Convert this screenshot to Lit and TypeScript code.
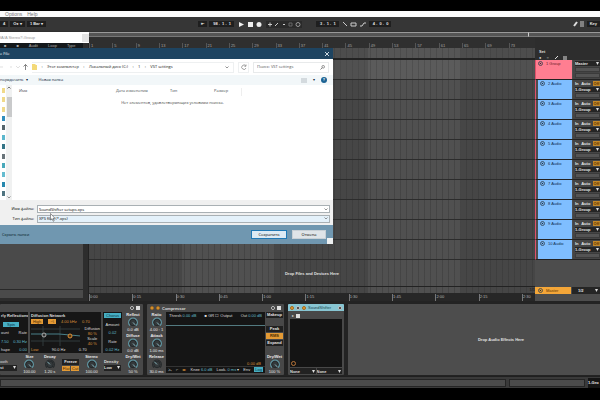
import { LitElement, html, svg, css } from "lit";
import { customElement, property } from "lit/decorators.js";

const bars = Array.from({ length: 19 }, (_, i) => 1 + i * 4);
const times = ["0:00", "0:15", "0:30", "0:45", "1:00", "1:15", "1:30", "1:45", "2:00", "2:15", "2:30"];
const tracks = [2, 3, 4, 5, 6, 7, 8, 9, 10];

@customElement("dial-knob")
class DialKnob extends LitElement {
  @property() label = "";
  @property() value = "";
  @property({ type: Boolean }) dim = false;
  static styles = css`
    :host { display: flex; flex-direction: column; align-items: center; width: 16px; color: #e8e8e8; font-size: 4px; line-height: 5px; white-space: nowrap; }
    svg { display: block; width: 14px; height: 10px; flex: none; }
    .label { font-weight: bold; }
  `;
  render() {
    return html`<span class="label">${this.label}</span>
      <svg viewBox="0 0 14 11" aria-hidden="true">
        <circle cx="7" cy="6" r="3.6" fill="#34393b" stroke="#22282a" />
        <path d="M3.6 9.4A4.8 4.8 0 1 1 10.4 9.4" fill="none" stroke=${this.dim ? "#252a2c" : "#5f99a6"} stroke-width="1.3" />
        <path d="M7 6L${this.dim ? "4 3" : "9.8 9"}" stroke="#8fc0ca" stroke-width="1" />
      </svg>
      <span>${this.value}</span>`;
  }
}

const base = css`
  * { box-sizing: border-box; }
  button, input, select { font: inherit; color: inherit; margin: 0; padding: 0; border: 0; border-radius: 0; background: none; min-width: 0; line-height: inherit; appearance: none; outline: none; white-space: nowrap; }
  svg { display: block; flex: none; }
`;

@customElement("save-dialog")
class SaveDialog extends LitElement {
  static styles = [base, css`
    :host { display: flex; flex-direction: column; background: #fff; color: #111; font-family: "Open Sans", "Noto Sans", sans-serif; font-size: 4px; line-height: 6px; white-space: nowrap; overflow: hidden; }
    .title { height: 11px; background: #1e4461; color: #fff; display: flex; align-items: center; justify-content: space-between; padding: 0 3px 0 0; }
    .address { height: 16px; display: flex; align-items: center; padding: 0 4px 0 0; gap: 4px; }
    .path { display: flex; align-items: center; gap: 3px; flex: 1; height: 11px; border: 1px solid #eef0f1; border-left: 0; padding-right: 4px; }
    .path i { font-style: normal; color: #333; width: 4px; text-align: center; }
    .grow { flex: 1; }
    .refresh { width: 11px; height: 11px; border: 1px solid #eef0f1; display: grid; place-items: center; }
    .search { width: 76px; height: 11px; border: 1px solid #e8eaeb; display: flex; align-items: center; padding: 0 3px; }
    .search input { flex: 1; color: #555; }
    .search input::placeholder { color: #555; }
    .tools { height: 10px; background: #f2f7f9; display: flex; align-items: center; padding: 0 6px 0 0; gap: 6px; color: #0c2338; }
    .new { margin-left: 5px; }
    .help { width: 6px; height: 6px; border-radius: 50%; background: #1b6293; color: #fff; font-weight: bold; line-height: 6px; text-align: center; }
    .files { flex: 1; display: flex; min-height: 0; }
    .tree { width: 12px; display: flex; justify-content: space-between; }
    .places { width: 6px; display: flex; flex-direction: column; align-items: flex-end; justify-content: space-between; padding: 3px 1px 3px 0; }
    .bar { width: 6px; background: #f0f1f1; display: flex; flex-direction: column; justify-content: space-between; align-items: center; padding: 1px 0; }
    .thumb { width: 5px; height: 20px; background: #c9cacb; margin-bottom: 72px; }
    .list { flex: 1; }
    .head { display: grid; grid-template-columns: 97px 54px 44px 27px 1fr; padding: 3px 0 0 7px; color: #44494e; height: 11px; }
    .head span:last-child { border-left: 1px solid #eee; }
    .empty { text-align: center; color: #444; padding: 4px 0 0; margin: 0; }
    .form { background: #f0f0f0; height: 25px; padding: 5px 3px 2px 0; display: grid; grid-template-columns: 34px 1fr; column-gap: 3px; row-gap: 1px; align-items: center; color: #000; }
    .form label { text-align: right; }
    .form input, .form select { width: 100%; height: 8px; border: 1px solid #a9b0b4; background: #fff; padding: 0 1px; line-height: 6px; }
    .form select { background: #e4f1fa; }
    .field { display: grid; align-items: center; }
    .field > * { grid-area: 1 / 1; }
    .field svg { justify-self: end; margin-right: 2px; }
    .foot { height: 19px; background: #7097b0; display: flex; align-items: center; padding: 0 7px 0 2px; gap: 5px; }
    .foot button { width: 34px; height: 9px; background: #dfe4e8; border: 1px solid #c8d0d6; color: #000; }
    .foot .primary { border-color: #1f78b5; background: #dceaf4; width: 36px; }
    .foot .hide { flex: 1; border: 0; background: none; width: auto; text-align: left; color: #041824; }
    .grip { position: absolute; right: 0; bottom: 0; width: 6px; height: 6px; background: #edf0f1; }
    .cursor { position: absolute; left: 50px; top: 165px; }
  `];
  render() {
    const place = (c: string) => html`<svg width="3" height="6"><rect width="3" height="5" fill=${c} /></svg>`;
    const chev = html`<svg width="4" height="3" viewBox="0 0 4 3"><path d="M.5 .5L2 2L3.5 .5" fill="none" stroke="#666" stroke-width=".7" /></svg>`;
    return html`
      <div class="title"><span>e File</span>
        <button aria-label="Закрыть"><svg width="6" height="6"><path d="M1 1L5 5M5 1L1 5" stroke="#dfe9ef" stroke-width=".9" /></svg></button></div>
      <div class="address">
        <svg width="28" height="8"><path d="M0 4H3M10 4H12M16 3L18 5L20 3" fill="none" stroke="#d3d3d3" stroke-width=".7" /><path d="M25.500 7V1.500M23.500 3.500L25.500 1.500L27.500 3.500" fill="none" stroke="#666" stroke-width=".8" /></svg>
        <div class="path"><svg width="5" height="6"><path d="M0 0H3L4 1H5V6H0Z" fill="#f3d978" /></svg>
          <i>›</i><span>Этот компьютер</span><i>›</i><span>Локальный диск (C:)</span><i>›</i><span>1</span><i>›</i><span>VST settings</span><span class="grow"></span>${chev}</div>
        <button class="refresh" aria-label="Обновить"><svg width="6" height="6"><path d="M4.800 2A2.200 2.200 0 1 0 5 4M5 .5V2.200H3.300" fill="none" stroke="#888" stroke-width=".8" /></svg></button>
        <div class="search"><input aria-label="Поиск" placeholder="Поиск: VST settings" /><svg width="5" height="5"><circle cx="3.200" cy="1.800" r="1.300" fill="none" stroke="#666" stroke-width=".7" /><path d="M2.200 2.800L.5 4.500" stroke="#666" stroke-width=".8" /></svg></div>
      </div>
      <div class="tools"><span>порядочить&nbsp; ▾</span><button class="new">Новая папка</button><span class="grow"></span>
        <svg width="6" height="5"><path d="M0 1H6M0 3H6M0 5H6" stroke="#a6afb6" stroke-width=".8" /></svg><span>▾</span><button class="help" aria-label="Справка">?</button></div>
      <div class="files">
        <div class="tree"><div class="places">${["#f0d98a", "#f0d98a", "#f0d98a", "#2f8dbd", "#55646b", "#5bb7cd", "#347486", "#69747a", "#49a9bb", "#65bcd0", "#2688ae", "#4f7480"].map(place)}</div>
          <div class="bar"><svg width="4" height="3"><path d="M.5 2.500L2 1L3.500 2.500" fill="none" stroke="#555" stroke-width=".8" /></svg><span class="thumb"></span>${chev}</div></div>
        <div class="list"><div class="head"><span>Имя</span><span>Дата изменения</span><span>Тип</span><span>Размер</span><span></span></div>
          <p class="empty">Нет элементов, удовлетворяющих условиям поиска.</p></div>
      </div>
      <div class="form">
        <label for="name">Имя файла:</label><div class="field"><input id="name" value="SoundShifter setups.xps" />${chev}</div>
        <label for="type">Тип файла:</label><div class="field"><select id="type"><option>XPS files (*.xps)</option></select>${chev}</div>
      </div>
      <div class="foot"><button class="hide">Скрыть папки</button><button class="primary">Сохранить</button><button>Отмена</button></div>
      <span class="grip"></span>
      <svg class="cursor" width="6" height="9" viewBox="0 0 6 9"><path d="M.5 .5V7L2 5.700L3.200 8.300L4.200 7.800L3 5.300H5Z" fill="#fff" stroke="#555" stroke-width=".6" /></svg>`;
  }
}

@customElement("app-root")
class AppRoot extends LitElement {
  static styles = [base, css`
    :host { display: flex; flex-direction: column; height: 100vh; box-sizing: border-box; padding: 11px 0 12px; background: #000; color: #dedede; font-family: "Liberation Sans", Arial, sans-serif; font-size: 4px; line-height: 5px; white-space: nowrap; overflow: hidden; position: relative; }
    .grow { flex: 1; }
    .menu { height: 6px; background: #fbfbfb; color: #777; font-size: 5px; line-height: 6px; display: flex; gap: 5px; padding-left: 5px; }
    .menu a { color: inherit; text-decoration: none; }
    .transport { height: 14px; background: #363636; display: grid; grid-template-columns: 302fr 298fr; align-items: center; }
    .left, .right, .left > div, .right > div { display: flex; align-items: center; gap: 2px; }
    .left, .right { justify-content: space-between; }
    .right { padding-left: 14px; }
    .cell { background: #1f1f1f; color: #e4e4e4; font-weight: bold; height: 6px; line-height: 6px; padding: 0 3px; }
    .overview { height: 7px; background: #303030; padding: 1px 0; display: flex; }
    .overview span { flex: 1; background: #555; border-top: 1px solid #999; border-bottom: 1px solid #777; }
    .overview span:first-child { flex: 529; border-right: 1px solid #ccc; }
    .overview span:last-child { flex: 71; }
    .work { flex: 1; min-height: 0; display: grid; grid-template-columns: 83px 5px 1fr 65px; background: #2d2d2d; }
    .browser { display: flex; flex-direction: column; padding: 0 0 3px; }
    .browser .tabs { height: 10px; background: #14181b; color: #aaa; padding: 5px 0 0 4px; display: flex; gap: 10px; }
    .browser .pane { flex: 1; background: #4a4a4a; border-bottom: 1px solid #292929; }
    .browser .info { height: 8px; background: #4a4a4a; }
    .timeline { display: flex; flex-direction: column; min-width: 0; overflow: hidden; border-left: 1px solid #222; }
    .ruler { height: 10px; display: flex; padding-top: 5px; background: #2f2f2f; color: #a5a5a5; flex: none; }
    .ruler span { width: calc(100% * 23 / 440); flex: none; padding-left: 1px; border-left: 1px solid #555; }
    .grid { flex: 1; display: flex; flex-direction: column; background:
      repeating-linear-gradient(90deg, #0000 0 5px, #34343466 5px 6px),
      repeating-linear-gradient(90deg, #464646 0 93px, #505050 93px 186px); }
    .scrub { height: 12px; background: #ffffff0a; border-bottom: 2px solid #222; }
    .lane { height: 20px; border-bottom: 1px solid #2c2c2c; }
    .lane.group { background: #ffffff10; }
    .drop { flex: 1; display: grid; place-items: center; font-weight: bold; color: #e0e0e0; border-bottom: 1px solid #222; }
    .sum { height: 6px; text-align: right; color: #151515; }
    .times { height: 8px; display: flex; background: #272727; color: #b4b4b4; padding-top: 1px; flex: none; }
    .times span { width: calc(100% * 10 / 103); flex: none; border-left: 1px solid #777; }
    .mixer { display: flex; flex-direction: column; background: #4d4d4d; overflow: hidden; }
    .mixer .top { height: 22px; flex: none; background: #2d2d2d; padding: 10px 0 0 4px; }
    .top div { display: flex; gap: 5px; align-items: center; height: 6px; }
    .track { height: 20px; display: grid; grid-template-columns: 36px 1fr; column-gap: 1px; border-bottom: 1px solid #222; border-left: 1px solid #e0506a; flex: none; }
    .name { background: #7fbeff; color: #0f2f50; display: flex; align-items: flex-start; gap: 3px; padding: 1px 2px; margin-left: 2px; }
    .group .name { background: #ff7e91; color: #6b1c2a; margin-left: 0; }
    .io { display: flex; flex-direction: column; gap: 1px; padding: 1px 0 1px 2px; background: #454545; color: #e4e4e4; }
    .switches { display: flex; justify-content: space-between; font-weight: bold; }
    .io .on { background: #c48828; color: #5a3400; width: 7px; text-align: center; }
    .io .pick { background: #252525; height: 5px; flex: none; }
    .io .pick select { height: 5px; background: none; color: #e4e4e4; }
    .pick { display: grid; grid-template-columns: 1fr; align-items: center; }
    .pick > * { grid-area: 1 / 1; }
    .pick svg { justify-self: end; }
    .slot { height: 5px; background: #545454; border: 1px solid #3b3b3b; }
    .master { height: 7px; border: 0; margin-bottom: 7px; }
    .master .name { background: #f4a638; color: #583305; margin: 0; padding: 1px 3px; }
    .master .io { padding: 1px 1px 0 6px; background: #252525; }
    .devices { height: 75px; background: #232323; display: flex; gap: 4px; padding: 3px 0 1px; flex: none; }
    .device { background: #484848; display: flex; flex-direction: column; border-radius: 1px; overflow: hidden; flex: none; }
    .bar { height: 8px; display: flex; align-items: center; gap: 2px; padding: 0 3px; font-weight: bold; flex: none; }
    .dot { width: 4px; height: 4px; border-radius: 50%; border: 1px solid #c9c9c9; background: #222; flex: none; }
    .dot.hot { background: #e99d35; border-color: #a06a1e; }
    .sq { width: 4px; height: 4px; background: #ddd; }
    .reverb { width: 143px; }
    .cols { flex: 1; display: flex; min-height: 0; }
    .rvmain { flex: 1; display: flex; flex-direction: column; justify-content: space-between; padding-right: 1px; }
    .panels { display: grid; grid-template-columns: 28px 71px 19px; gap: 2px; height: 41px; }
    .panel { background: #161616; display: flex; flex-direction: column; justify-content: space-between; overflow: hidden; padding: 1px; }
    .row { display: flex; justify-content: space-between; gap: 2px; }
    .cy { color: #62bccb; }
    .am { color: #dc9038; }
    .tag { background: #46aec3; color: #0b333c; text-align: center; height: 5px; }
    .tag.o { background: #e39a35; color: #4a2b00; padding: 0 2px; }
    .mini .row { gap: 1px; }
    .mini .tag.o { padding: 0; flex: 1; }
    .tag.small { width: 16px; margin: 0 0 0 2px; }
    .knobs { display: flex; justify-content: space-between; padding: 0 3px 0 0; height: 21px; }
    .stack { display: flex; flex-direction: column; justify-content: space-between; padding: 0 2px 1px 0; }
    .dark { background: #202020; color: #e2e2e2; font-weight: bold; height: 6px; line-height: 6px; text-align: center; width: 100%; }
    .dark.on { background: #e39a35; color: #4a2b00; }
    .mini { width: 17px; display: flex; flex-direction: column; gap: 1px; justify-content: center; }
    .center { text-align: center; }
    .comp { width: 137px; }
    .comp .stack { width: 19px; padding: 0 1px 1px; align-items: center; }
    .screen { flex: 1; background: #151515; display: flex; flex-direction: column; padding: 1px 3px; margin-bottom: 2px; }
    .curve { height: 1px; background: #527a80; margin: 7px -3px 0; }
    .bottom { margin: 0 -3px; padding: 0 2px; border-top: 1px solid #333; }
    .bottom .tag { padding: 0 1px; }
    .right-text { text-align: right; }
    .shift { width: 56px; padding-bottom: 1px; }
    .shift .bar { background: #87c5d2; color: #194650; height: 7px; font-weight: normal; padding: 0 2px; }
    .shift .row { padding: 2px 2px 1px 4px; justify-content: flex-start; align-items: center; }
    .pad { flex: 1; background: #141414; margin: 0 2px 1px; display: flex; align-items: flex-end; padding: 1px; }
    .pad span { width: 5px; height: 5px; border: 1px solid #b77438; border-radius: 50%; }
    .picks { display: grid; grid-template-columns: 1fr 1fr; gap: 1px; padding: 0 2px; }
    .pick select { background: #222; color: #ddd; font-weight: bold; width: 100%; height: 6px; }
    .effects { flex: 1; background: #4d4d4d; display: grid; place-items: center; padding-left: 54px; font-weight: bold; color: #e0e0e0; }
    .status { height: 12px; background: #3a3a3a; border-top: 1px solid #202020; display: grid; grid-template-columns: 507fr 76fr 12px; gap: 3px; flex: none; align-items: center; }
    .status span { height: 8px; background: #4b4b4b; border: 1px solid #252525; }
    .status b { background: #151515; height: 10px; line-height: 10px; color: #eee; }
    .float { position: absolute; left: 0; top: 32px; width: 89px; height: 11px; background: #fff; color: #999; font-size: 4px; line-height: 11px; display: flex; justify-content: space-between; }
    .float button { width: 7px; height: 8px; background: #e5e5e5; margin-top: 2px; }
    save-dialog { position: absolute; left: 0; top: 48px; width: 55.5%; height: 196px; }
  `];

  private pick(label: string, text: string) {
    return html`<div class="pick"><select aria-label=${label}><option>${text}</option></select><svg width="4" height="3"><path d="M0 0H3L1.500 3Z" fill="#ddd" /></svg></div>`;
  }
  private play() {
    return svg`<svg width="5" height="5"><circle cx="2.500" cy="2.500" r="2" fill="none" stroke="#30404c" stroke-width=".8"/><path d="M1.800 1.500L3.500 2.500L1.800 3.500Z" fill="#202a33"/></svg>`;
  }

  render() {
    return html`
      <nav class="menu"><a href="#">Options</a><a href="#">Help</a></nav>
      <div class="transport">
        <div class="left"><div><span class="cell">4</span><span class="cell">O● ▾</span><span class="cell">1 Bar ▾</span></div>
          <div><span class="cell">⇤</span><span class="cell">&nbsp;98 .&nbsp; 1 .&nbsp; 1</span>
            <svg width="28" height="7"><path d="M3 1L8 3.500L3 6Z" fill="#eee" /><rect x="12" y="1" width="5" height="5" fill="#eee" /><circle cx="23" cy="3.500" r="2.500" fill="#eee" /></svg>
            <svg width="36" height="7"><rect width="36" height="7" fill="#2a2a2a" /><path d="M2 3.500H6M4 1.500V5.500M9 5L12 2M17 3.500H19" stroke="#ccc" /><path d="M23 2H26V5H23Z" fill="none" stroke="#666" /><circle cx="32" cy="3.500" r="2" fill="none" stroke="#999" /></svg></div></div>
        <div class="right"><div><span class="cell">&nbsp;3 .&nbsp; 1 .&nbsp; 1</span>
            <svg width="26" height="7"><path d="M2 1L6 5M10 2H15V5H10ZM19 5H21L23 2H25" fill="none" stroke="#ccc" /></svg>
            <span class="cell">&nbsp;4 .&nbsp; 0 .&nbsp; 0</span></div>
          <div><svg width="12" height="6"><path d="M1 5L4 1" stroke="#ddd" stroke-width="2" /><path d="M7 1H11M7 3H11M7 5H11" stroke="#ccc" /></svg><span class="cell">Key</span></div></div>
      </div>
      <div class="overview"><span></span><span></span></div>
      <div class="work">
        <div class="browser"><div class="tabs"><span>■</span><span>■</span><span>Audit</span><span>Loop</span><span>Type</span></div><div class="pane"></div><div class="info"></div></div>
        <div></div>
        <div class="timeline">
          <div class="ruler">${bars.map((b) => html`<span>${b}</span>`)}</div>
          <div class="grid"><div class="scrub"></div><div class="lane group"></div>${tracks.map(() => html`<div class="lane"></div>`)}
            <div class="drop">Drop Files and Devices Here</div><div class="sum">1/1</div></div>
          <div class="times">${times.map((t) => html`<span>${t}</span>`)}</div>
        </div>
        <div class="mixer">
          <div class="top"><div><b>Set</b></div><div><span>●</span><span>○</span><svg width="14" height="5"><path d="M1 4L4 1M9 2H13M9 4H13" stroke="#ddd" /></svg></div></div>
          <div class="track group"><div class="name">${this.play()}<span>1 Group</span></div><div class="io">${this.pick("Output", "Master")}<span class="slot"></span><span class="slot"></span></div></div>
          ${tracks.map((n) => html`<div class="track"><div class="name">${this.play()}<span>${n} Audio</span></div>
            <div class="io"><div class="switches"><span>In</span><span>Auto</span><span class="on">Off</span></div>${this.pick("Output " + n, "1-Group")}<span class="slot"></span></div></div>`)}
          <span class="grow"></span>
          <div class="track master"><div class="name">${this.play()}<span>Master</span></div><div class="io">${this.pick("Cue", "1/2")}</div></div>
        </div>
      </div>
      <div class="devices">
        <section class="device reverb">
          <div class="bar"><span class="grow"></span><span class="dot"></span><span class="sq"></span></div>
          <div class="cols"><div class="rvmain">
            <div class="panels">
              <div class="panel"><b>rly Reflections</b><button class="tag small">Spin</button><div class="row"><span>ount</span><span>Rate</span></div><div class="row cy"><span>7.50</span><span>0.30 Hz</span></div><div class="row"><span>hape</span><span class="cy">0.00</span></div></div>
              <div class="panel"><b>Diffusion Network</b>
                <div class="row am"><button class="tag o">High</button><button class="tag o">~\\</button><span>4.00 kHz</span><span>0.70</span><span></span><span></span></div>
                <div class="row"><svg width="49" height="20"><path d="M0 3H50M0 15H50M12 0V20M29 0V20" stroke="#303a3c" /><path d="M0 8H28L50 10" fill="none" stroke="#487f88" /><circle cx="13" cy="9" r="2" fill="#333" stroke="#aaa" /><circle cx="39" cy="10" r="2" fill="#543410" stroke="#dc9038" /></svg>
                  <div class="center"><div>Diffusion</div><div class="am">80 %</div><div>Scale</div><div class="am">40 %</div></div></div>
                <div class="row"><button class="am">Low</button><span>90.0 Hz</span><span>0.70</span><span></span></div></div>
              <div class="panel center"><button class="tag">Chorus</button><span>Amount</span><span class="cy">0.02</span><span>Rate</span><span class="cy">0.02 Hz</span></div>
            </div>
            <div class="knobs"><div class="mini"><span>ooth</span>${this.pick("Smooth", "st")}</div>
              <dial-knob label="Size" value="100.00"></dial-knob><dial-knob dim label="Decay" value="1.20 s"></dial-knob>
              <div class="mini"><button class="dark">Freeze</button><div class="row"><button class="tag o">Flat</button><button class="tag o">Cut</button></div></div>
              <dial-knob label="Stereo" value="100.00"></dial-knob><div class="mini"><b>Density</b>${this.pick("Density", "Low")}</div></div>
          </div>
          <div class="stack"><dial-knob label="Reflect" value="0.0 dB"></dial-knob><dial-knob label="Diffuse" value="0.0 dB"></dial-knob><dial-knob label="Dry/Wet" value="50 %"></dial-knob></div></div>
        </section>
        <section class="device comp">
          <div class="bar"><span class="dot hot"></span><span class="dot hot"></span><span>Compressor</span><span class="grow"></span><span class="dot"></span><span class="sq"></span></div>
          <div class="cols"><div class="stack"><dial-knob label="Ratio" value="4.00 : 1"></dial-knob><dial-knob label="Attack" value="1.00 ms"></dial-knob><dial-knob dim label="Release" value="30.0 ms"></dial-knob></div>
            <div class="screen"><div class="row"><span>Thresh <span class="cy">0.00 dB</span></span><span>■ GR ☐ Output</span><span>Out <span class="cy">0.00 dB</span></span></div>
              <div class="curve"></div><span class="grow"></span><span class="am right-text">0.00 dB&nbsp;</span>
              <div class="row bottom"><span>⋋</span><span>⌐</span><span class="am">◂▸</span><span>Knee <span class="cy">6.0 dB</span></span><span>Look. <span class="cy">0 ms</span> ▾</span><span>Env</span><button class="tag">Log</button></div></div>
            <div class="stack"><button class="dark">Makeup</button><div class="mini"><button class="dark">Peak</button><button class="dark on">RMS</button><button class="dark">Expand</button></div><dial-knob label="Dry/Wet" value="100 %"></dial-knob></div></div>
        </section>
        <section class="device shift">
          <div class="bar"><span class="dot hot"></span><span class="dot"></span><span class="dot hot"></span><span>SoundShifter</span><span class="grow"></span><span class="dot"></span></div>
          <div class="row"><span>▸</span><span class="sq"></span></div>
          <div class="pad"><span></span></div>
          <div class="picks">${this.pick("X", "None")}${this.pick("Y", "None")}</div>
        </section>
        <div class="effects">Drop Audio Effects Here</div>
      </div>
      <footer class="status"><span></span><span></span><b>1-Gro</b></footer>
      <div class="float"><span>fA/A Stereo?-Group</span><button aria-label="Close"></button></div>
      <save-dialog></save-dialog>`;
  }
}
